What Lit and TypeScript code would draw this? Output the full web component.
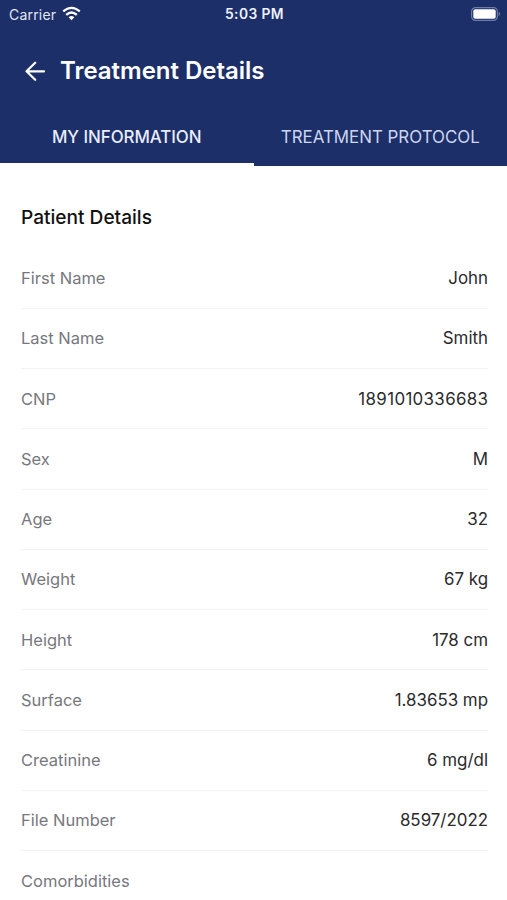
import { LitElement, html, css } from "lit";
import { customElement } from "lit/decorators.js";
import { classMap } from "lit/directives/class-map.js";

const ROWS: [string, string][] = [
  ["First Name", "John"],
  ["Last Name", "Smith"],
  ["CNP", "1891010336683"],
  ["Sex", "M"],
  ["Age", "32"],
  ["Weight", "67 kg"],
  ["Height", "178 cm"],
  ["Surface", "1.83653 mp"],
  ["Creatinine", "6 mg/dl"],
  ["File Number", "8597/2022"],
  ["Comorbidities", ""],
];

@customElement("app-root")
export class AppRoot extends LitElement {
  static styles = css`
    :host { display: block; height: 900px; overflow: hidden; background: #fff; font-family: Inter, "Liberation Sans", sans-serif; color: #2a2a2c; }
    * { box-sizing: border-box; }
    header { background: #1c2f69; color: #fff; height: 166px; display: flex; flex-direction: column; }
    .status { height: 28px; display: grid; grid-template-columns: 1fr auto 1fr; align-items: center; padding: 0 7px 0 9px; font-size: 14px; }
    .carrier { display: flex; align-items: center; gap: 6px; letter-spacing: 0.2px; color: #e3e7f3; }
    .time { font-weight: 600; font-size: 13.8px; letter-spacing: 0.42px; color: #eef1f9; }
    .battery { justify-self: end; display: block; margin-right: -1px; }
    .wifi { display: block; margin-top: -2px; }
    .title { height: 85px; display: flex; align-items: center; padding-left: 24px; gap: 15px; }
    h1 { margin: 0; font-size: 24px; font-weight: 600; letter-spacing: -0.02px; }
    .tabs { flex: 1; display: grid; grid-template-columns: 1fr 1fr; }
    .tab { display: flex; align-items: center; justify-content: center; padding-bottom: 3px; font-size: 16.9px; color: #ced6ee; border-bottom: 3px solid transparent; }
    .active { color: #e9edf9; border-color: #fff; font-weight: 500; letter-spacing: -0.05px; }
    main { padding: 0 19px 0 21px; }
    h2 { margin: 0; height: 82.5px; line-height: 103px; font-size: 19.1px; font-weight: 500; color: #111; }
    .row { height: 60.25px; display: flex; justify-content: space-between; align-items: center; border-bottom: 1px solid #f3f3f5; font-size: 16.5px; }
    .label { color: #77787d; }
    .value { font-size: 16.9px; }
    .long { letter-spacing: 0.34px; margin-right: -0.34px; }
  `;

  render() {
    return html`
      <header>
        <div class="status">
          <div class="carrier"><span>Carrier</span>
            <svg class="wifi" width="19" height="15" viewBox="0 0 19 15" fill="none" stroke="#fff" stroke-width="2.3">
              <path d="M1.2 5.4Q9.5-1.6 17.8 5.4" /><path d="M4.2 8.8Q9.5 4.2 14.8 8.8" /><path d="M6.6 11.2Q9.5 8.6 12.4 11.2L9.5 14.2Z" fill="#fff" stroke="none" />
            </svg>
          </div>
          <span class="time">5:03 PM</span>
          <svg class="battery" width="30" height="14" viewBox="0 0 30 14"><rect x=".6" y=".6" width="25.8" height="12.8" rx="4" fill="none" stroke="#6f7ca8" stroke-width="1.2" /><rect x="2.3" y="2.2" width="22.4" height="9.6" rx="2" fill="#fff" /><path d="M27.7 4.8Q30.6 7 27.7 9.2Z" fill="#6f7ca8" /></svg>
        </div>
        <div class="title">
          <svg width="21" height="20" viewBox="0 0 21 20" fill="none" stroke="#fff" stroke-width="2.2" stroke-linecap="round" stroke-linejoin="round"><path d="M20 10.3H2.5M11.2 1.7L2.5 10.3L11.2 18.8" /></svg>
          <h1>Treatment Details</h1>
        </div>
        <nav class="tabs"><div class="tab active"><span>MY INFORMATION</span></div><div class="tab"><span>TREATMENT PROTOCOL</span></div></nav>
      </header>
      <main>
        <h2>Patient Details</h2>
        ${ROWS.map(([l, v]) => html`<div class="row"><span class="label">${l}</span><span class=${classMap({ value: true, long: v.length > 12 })}>${v}</span></div>`)}
      </main>`;
  }
}
